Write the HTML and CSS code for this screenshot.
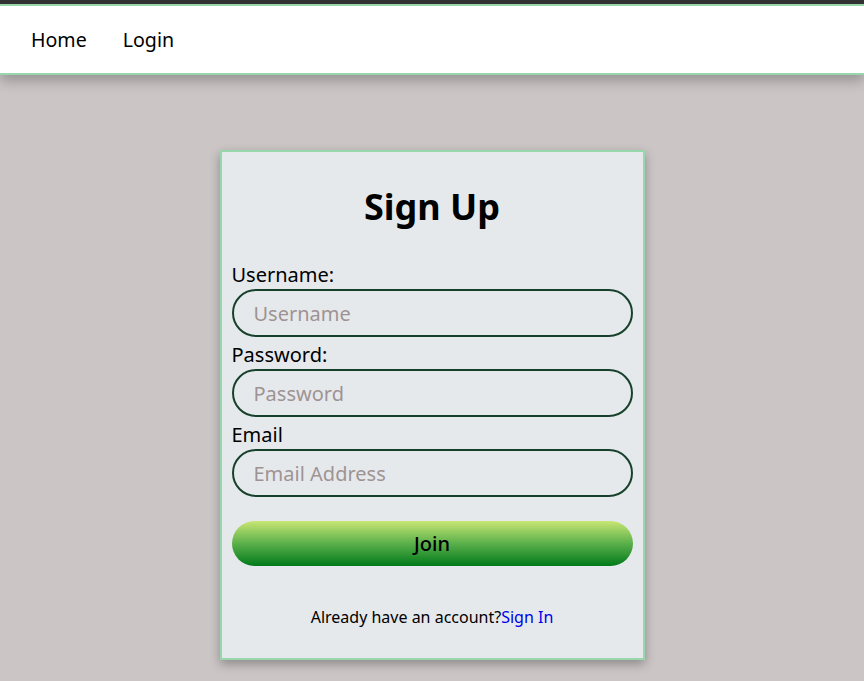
FILE: index.html
```html
<!DOCTYPE html>
<html lang="en">
<head>
<meta charset="utf-8">
<title>Sign Up</title>
<link rel="stylesheet" href="styles.css">
</head>
<body>
<div class="topbar"></div>
<nav class="nav">
  <a href="#" class="nav-link">Home</a>
  <a href="#" class="nav-link">Login</a>
</nav>
<main class="main">
  <form class="card">
    <h1 class="title">Sign Up</h1>
    <label class="label" for="u">Username:</label>
    <input class="field" id="u" type="text" placeholder="Username">
    <label class="label" for="p">Password:</label>
    <input class="field" id="p" type="password" placeholder="Password">
    <label class="label" for="e">Email</label>
    <input class="field" id="e" type="email" placeholder="Email Address">
    <button class="join" type="button">Join</button>
    <p class="footer">Already have an account?<a href="#" class="signin">Sign In</a></p>
  </form>
</main>
</body>
</html>
```
FILE: styles.css
```css
html, body {
  margin: 0;
  padding: 0;
}
body {
  background: #cbc5c5;
  font-family: "Noto Sans", "Open Sans", sans-serif;
  color: #000;
  min-height: 681px;
}
.topbar {
  height: 4px;
  background: #333333;
}
.nav {
  position: relative;
  display: flex;
  align-items: center;
  gap: 36px;
  height: 67px;
  padding-left: 31px;
  background: #fff;
  border-top: 2px solid #98d7ac;
  border-bottom: 2px solid #98d7ac;
  box-shadow: 0 6px 12px rgba(0, 0, 0, 0.25);
}
.nav-link {
  font-size: 19.6px;
  color: #000;
  text-decoration: none;
}
.main {
  display: flex;
  justify-content: center;
  padding-top: 75px;
}
.card {
  width: 401px;
  padding: 10px 10px 30px;
  background: #e6e9ec;
  border: 2px solid #98d7ac;
  box-shadow: 0 4px 10px rgba(0, 0, 0, 0.3);
  display: flex;
  flex-direction: column;
}
.title {
  margin: 19px 0 28px;
  font-size: 36px;
  font-weight: 700;
  line-height: 52px;
  text-align: center;
}
.label {
  display: block;
  font-size: 20px;
  line-height: 27px;
  margin-top: 4px;
}
.title + .label {
  margin-top: 0;
}
.field {
  box-sizing: border-box;
  width: 100%;
  height: 48px;
  margin: 1px 0 0;
  padding: 0 20px;
  border: 2px solid #17402a;
  border-radius: 24px;
  background: transparent;
  font-family: inherit;
  font-size: 20px;
  color: #000;
  outline: none;
}
.field::placeholder {
  color: #9e9393;
}
.join {
  margin-top: 24px;
  height: 45px;
  border: none;
  border-radius: 23px;
  background: linear-gradient(to bottom, #c8e673, #5bb04b 50%, #017a1a);
  font-family: inherit;
  font-size: 20px;
  font-weight: 500;
  color: #000;
}
.footer {
  margin: 40px 0 0;
  font-size: 16px;
  line-height: 22px;
  text-align: center;
}
.signin {
  color: #0000ee;
  text-decoration: none;
}
```
